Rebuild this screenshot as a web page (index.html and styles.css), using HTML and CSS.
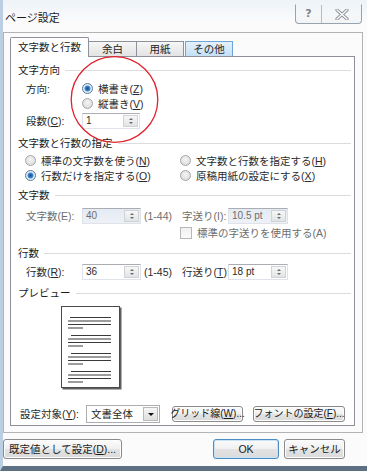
FILE: index.html
```html
<!DOCTYPE html>
<html lang="ja">
<head>
  <meta charset="UTF-8">
  <title>ページ設定</title>
  <link rel="stylesheet" href="styles.css">
</head>
<body>
<div class="window">
  <!-- タイトルバー -->
  <div class="titlebar">
    <span class="title">ページ設定</span>
    <div class="caption">
      <span class="cap help">?</span>
      <span class="cap close">
        <svg width="14" height="11" viewBox="0 0 14 11">
          <path d="M2 1 L12 10 M12 1 L2 10" stroke="#8a8f96" stroke-width="3.2" stroke-linecap="round"/>
          <path d="M2 1 L12 10 M12 1 L2 10" stroke="#fdfdfd" stroke-width="1.4" stroke-linecap="round"/>
        </svg>
      </span>
    </div>
  </div>

  <div class="group">
    <div class="tabs">
      <div class="tab active">文字数と行数</div>
      <div class="tab">余白</div>
      <div class="tab">用紙</div>
      <div class="tab hot">その他</div>
    </div>

    <div class="panel">
      <!-- 文字方向 -->
      <div class="sec-head first">文字方向</div>
      <div class="row r-dir">
        <span class="lbl">方向:</span>
        <span class="radio checked"><i></i>横書き(<u>Z</u>)</span>
      </div>
      <div class="row r-dir2">
        <span class="radio"><i></i>縦書き(<u>V</u>)</span>
      </div>
      <div class="row r-col">
        <span class="lbl">段数(<u>C</u>):</span>
        <span class="spin w58"><span class="val">1</span><span class="arrows"><b class="up"></b><b class="down"></b></span></span>
      </div>

      <!-- 文字数と行数の指定 -->
      <div class="sec-head h2">文字数と行数の指定</div>
      <div class="radio-grid">
        <span class="radio"><i></i>標準の文字数を使う(<u>N</u>)</span>
        <span class="radio"><i></i>文字数と行数を指定する(<u>H</u>)</span>
        <span class="radio checked"><i></i>行数だけを指定する(<u>O</u>)</span>
        <span class="radio"><i></i>原稿用紙の設定にする(<u>X</u>)</span>
      </div>

      <!-- 文字数 -->
      <div class="sec-head h3">文字数</div>
      <div class="row r-num disabled">
        <span class="lbl">文字数(E):</span>
        <span class="spin w59 off"><span class="val">40</span><span class="arrows"><b class="up"></b><b class="down"></b></span></span>
        <span class="range">(1-44)</span>
        <span class="lbl2">字送り(I):</span>
        <span class="spin w60 off"><span class="val">10.5 pt</span><span class="arrows"><b class="up"></b><b class="down"></b></span></span>
      </div>
      <div class="row r-check disabled">
        <span class="check"></span>標準の字送りを使用する(A)
      </div>

      <!-- 行数 -->
      <div class="sec-head h4">行数</div>
      <div class="row r-lines">
        <span class="lbl">行数(<u>R</u>):</span>
        <span class="spin w59"><span class="val">36</span><span class="arrows"><b class="up"></b><b class="down"></b></span></span>
        <span class="range">(1-45)</span>
        <span class="lbl2">行送り(<u>T</u>):</span>
        <span class="spin w60"><span class="val">18 pt</span><span class="arrows"><b class="up"></b><b class="down"></b></span></span>
      </div>

      <!-- プレビュー -->
      <div class="sec-head h5">プレビュー</div>
      <div class="preview">
        <svg width="62" height="86" viewBox="0 0 62 86">
          <rect x="1.5" y="1.5" width="59" height="82" fill="#606060"/>
          <rect x="0.5" y="0.5" width="58" height="81" fill="#fff" stroke="#4a4a4a"/>
          <g fill="#3a3a3a">
            <rect x="9" y="11" width="41" height="1"/>
            <rect x="7" y="14.5" width="43" height="1"/>
            <rect x="7" y="18" width="43" height="1"/>
            <rect x="7" y="21.5" width="15" height="1"/>

            <rect x="10" y="29" width="40" height="1"/>
            <rect x="7" y="32.5" width="43" height="1"/>
            <rect x="7" y="36" width="43" height="1"/>
            <rect x="7" y="39.5" width="15" height="1"/>

            <rect x="10" y="47" width="40" height="1"/>
            <rect x="7" y="50.5" width="43" height="1"/>
            <rect x="7" y="54" width="43" height="1"/>
            <rect x="7" y="57.5" width="15" height="1"/>

            <rect x="10" y="65" width="40" height="1"/>
            <rect x="7" y="68.5" width="43" height="1"/>
            <rect x="7" y="72" width="43" height="1"/>
            <rect x="7" y="75.5" width="15" height="1"/>
          </g>
        </svg>
      </div>

      <!-- 設定対象 -->
      <div class="row r-target">
        <span class="lbl3">設定対象(<u>Y</u>):</span>
        <span class="select"><span class="val">文書全体</span><span class="drop"><b class="down"></b></span></span>
        <span class="btn small grid-btn">グリッド線(<u>W</u>)...</span>
        <span class="btn small font-btn">フォントの設定(<u>F</u>)...</span>
      </div>
    </div>
  </div>

  <!-- 下部ボタン -->
  <div class="footer">
    <span class="btn default-btn">既定値として設定(<u>D</u>)...</span>
    <span class="btn ok-btn">OK</span>
    <span class="btn cancel-btn">キャンセル</span>
  </div>

  <!-- 赤い丸印 -->
  <svg class="mark" width="90" height="90" viewBox="0 0 90 90">
    <ellipse cx="44.5" cy="43.5" rx="43.3" ry="42.8" fill="none" stroke="#e0202c" stroke-width="1.3"/>
  </svg>
</div>
</body>
</html>
```

FILE: styles.css
```css
* {
  box-sizing: border-box;
}

body {
  margin: 0;
  font-family: "Liberation Sans", "Noto Sans CJK JP", sans-serif;
  font-size: 10.5px;
  line-height: 14px;
  color: #2a2a2a;
  background: #fff;
}

u {
  text-decoration: underline;
  text-underline-offset: 1px;
}

/* ウィンドウ枠 */
.window {
  position: relative;
  width: 367px;
  height: 471px;
  background: #fbfbfb;
  border-left: 3px solid #bccfe2;
  border-bottom: 5px solid #5d6f82;
  overflow: hidden;
}

/* タイトルバー */
.titlebar {
  height: 32px;
  display: flex;
  align-items: flex-start;
  background: linear-gradient(#eef3f8, #fbfbfb 70%);
}

.title {
  padding: 10px 0 0 2px;
  font-size: 11px;
  line-height: 16px;
  color: #1a1a1a;
}

.caption {
  margin: 4px 5px 0 auto;
  display: flex;
  height: 20px;
  border: 1px solid #98a3b0;
  border-top-color: transparent;
  border-radius: 0 0 4px 4px;
  background: linear-gradient(rgba(255,255,255,0), #f3f4f6);
}

.cap {
  display: flex;
  align-items: center;
  justify-content: center;
}

.help {
  width: 26px;
  border-right: 1px solid #b4bcc6;
  color: #7d838a;
  font-family: "DejaVu Sans", sans-serif;
  font-size: 11px;
  font-weight: bold;
}

.close {
  width: 39px;
}

/* 外側のグループ枠 */
.group {
  width: 360px;
  height: 401px;
  border: 1px solid #b3b3b3;
  padding: 4px 0 0 6px;
}

/* タブ */
.tabs {
  display: flex;
  align-items: flex-end;
  height: 19px;
}

.tab {
  height: 15px;
  line-height: 14px;
  text-align: center;
  border: 1px solid #8e9199;
  border-bottom: none;
  background: linear-gradient(#f6f6f6, #e3e3e3);
  color: #222;
}

.tab.active {
  position: relative;
  z-index: 1;
  width: 79px;
  height: 20px;
  margin-bottom: -1px;
  padding-top: 2px;
  background: #fff;
  border-radius: 2px 2px 0 0;
}

.tab:nth-child(2) {
  width: 48px;
  border-left: none;
}

.tab:nth-child(3) {
  width: 47px;
  border-left: none;
}

.tab.hot {
  width: 48px;
  margin-left: 1px;
  border-color: #6ea4d6;
  background: linear-gradient(#e4f1fc, #c5e0f6);
}

/* タブの中身 */
.panel {
  width: 345px;
  height: 370px;
  border: 1px solid #8e9199;
  background: #fff;
  padding: 0 3px 0 7px;
}

.sec-head {
  display: flex;
  align-items: center;
  gap: 5px;
  height: 14px;
  color: #1a1a1a;
}

.sec-head::after {
  content: "";
  flex: 1;
  height: 1px;
  background: #dcdcdc;
}

.sec-head.first { margin-top: 6px; }
.sec-head.h2 { margin-top: 7px; }
.sec-head.h3 { margin-top: 5px; }
.sec-head.h4 { margin-top: 6px; }
.sec-head.h5 { margin-top: 6px; }

.row {
  display: flex;
  align-items: center;
  height: 15px;
  padding-left: 8px;
  white-space: nowrap;
}

.lbl {
  width: 56px;
}

.r-dir { margin-top: 4px; }
.r-dir2 { padding-left: 64px; }
.r-col { margin-top: 2px; height: 16px; }

/* ラジオボタン */
.radio {
  display: inline-flex;
  align-items: center;
  white-space: nowrap;
}

.radio i {
  display: inline-block;
  width: 11px;
  height: 11px;
  margin-right: 5px;
  border-radius: 50%;
  border: 1px solid #a3a5a7;
  background: radial-gradient(circle at 50% 40%, #f4f4f4, #d6d6d6);
}

.radio.checked i {
  border-color: #5b7a98;
  background: radial-gradient(circle at 50% 50%, #134f8e 0, #3b8ad6 2.6px, #e9f0f7 3.4px, #d8dde3 100%);
}

.radio-grid {
  display: grid;
  grid-template-columns: 155px auto;
  grid-auto-rows: 15px;
  margin-top: 3px;
  padding-left: 7px;
}

/* スピンボックス */
.spin {
  display: inline-flex;
  height: 16px;
  border: 1px solid #dfe3e9;
  border-top-color: #abadb3;
  background: #fff;
  font-size: 10px;
}

.w58 { width: 58px; }
.w59 { width: 59px; }
.w60 { width: 60px; }

.spin .val {
  flex: 1;
  padding-left: 3px;
  line-height: 14px;
}

.spin.off {
  background: linear-gradient(#e4ebf3, #eef2f7);
  color: #6d6d6d;
}

.arrows {
  width: 15px;
  margin: 1px;
  display: flex;
  flex-direction: column;
  align-items: center;
  justify-content: space-evenly;
  border: 1px solid #cfd2d6;
  background: linear-gradient(#f7f7f7, #e2e3e5);
}

.arrows .up, .arrows .down {
  width: 0;
  height: 0;
  border-left: 2.5px solid transparent;
  border-right: 2.5px solid transparent;
}

.up { border-bottom: 2.5px solid #6a6a6a; }
.down { border-top: 2.5px solid #6a6a6a; }

.r-num { margin-top: 6px; height: 16px; }
.r-lines { margin-top: 4px; height: 16px; }

.range {
  width: 38px;
  margin-left: 3px;
}

.lbl2 {
  width: 46px;
}

.disabled {
  color: #6d6d6d;
}

.r-check {
  margin-top: 2px;
  height: 14px;
  padding-left: 162px;
}

.check {
  display: inline-block;
  width: 12px;
  height: 12px;
  margin-right: 5px;
  border: 1px solid #b7b7b7;
  background: linear-gradient(#f1f1f1, #fafafa);
}

/* プレビュー */
.preview {
  height: 86px;
  margin: 6px 0 0 43px;
}

.preview svg {
  display: block;
}

/* 設定対象 */
.r-target {
  margin-top: 13px;
  height: 18px;
  padding-left: 2px;
}

.lbl3 {
  width: 66px;
}

.select {
  display: inline-flex;
  width: 74px;
  height: 18px;
  border: 1px solid #abadb3;
  background: #fff;
}

.select .val {
  flex: 1;
  padding-left: 4px;
  line-height: 16px;
}

.drop {
  width: 15px;
  margin: 1px;
  display: flex;
  align-items: center;
  justify-content: center;
  border: 1px solid #b9b9b9;
  background: linear-gradient(#f6f6f6, #dedede);
}

.drop .down {
  width: 0;
  height: 0;
  border-left: 3px solid transparent;
  border-right: 3px solid transparent;
  border-top: 3.5px solid #111;
}

/* ボタン */
.btn {
  display: inline-flex;
  align-items: center;
  justify-content: center;
  height: 20px;
  border: 1px solid #8a8a8a;
  border-radius: 3px;
  background: linear-gradient(#fbfbfb, #f0f0f0 50%, #e3e3e3 51%, #dadada);
  box-shadow: inset 0 0 0 1px #fdfdfd;
  white-space: nowrap;
  color: #1a1a1a;
}

.btn.small {
  height: 16px;
  font-size: 10px;
}

.grid-btn {
  width: 71px;
  margin-left: 12px;
}

.font-btn {
  width: 92px;
  margin-left: 10px;
}

.footer {
  display: flex;
  padding: 6px 22px 0 0;
}

.default-btn {
  width: 119px;
  margin-right: auto;
}

.ok-btn {
  width: 66px;
  margin-right: 5px;
  border-color: #4c8cc4;
  box-shadow: inset 0 0 0 1px #c7e3f6;
}

.cancel-btn {
  width: 61px;
}

/* 赤い丸印 */
.mark {
  position: absolute;
  left: 67px;
  top: 56px;
}
```
